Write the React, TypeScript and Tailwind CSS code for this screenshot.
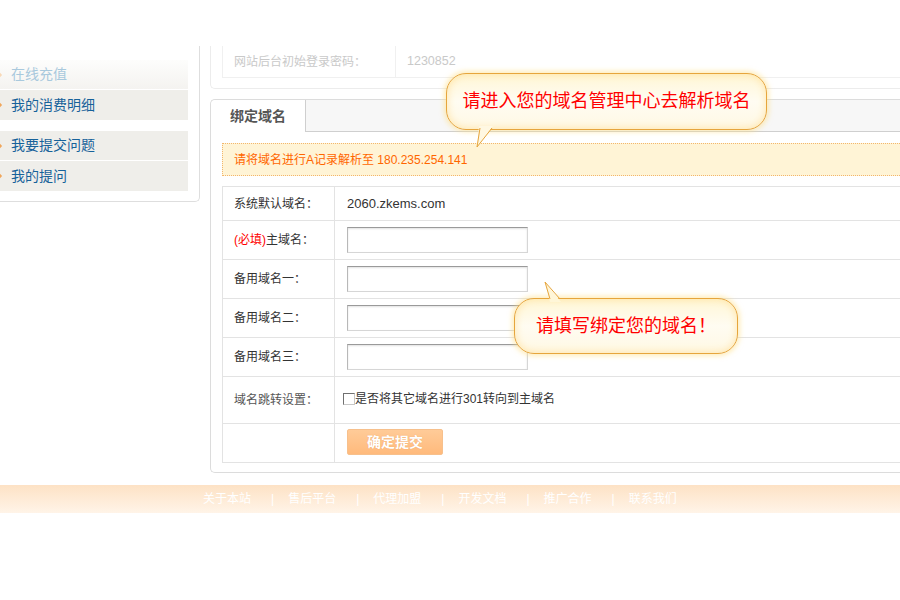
import React from 'react';

const font = "font-['Liberation_Sans','Noto_Sans_CJK_SC',sans-serif]";

const Chevron: React.FC<{ faded?: boolean }> = ({ faded }) => (
  <svg width="8" height="10" viewBox="0 0 8 10" className="-ml-[4px] mr-[7px] shrink-0">
    <path d="M1 1 L5 5 L1 9" fill="none" stroke={faded ? '#f8d9b8' : '#f0a65c'} strokeWidth="1.6" />
  </svg>
);

const SideItem: React.FC<{ label: string; faded?: boolean; sep?: boolean }> = ({ label, faded, sep }) => (
  <div
    className={`flex items-center h-[30px] text-[14px] ${sep ? 'border-b border-white' : ''} ${
      faded ? 'bg-gradient-to-b from-[#fdfdfc] to-[#f4f3f0] text-[#a9c9dd]' : 'bg-[#efeeea] text-[#17629a]'
    }`}
  >
    <Chevron faded={faded} />
    <span>{label}</span>
  </div>
);

const Row: React.FC<{ label: React.ReactNode; h: string; last?: boolean; children?: React.ReactNode }> = ({
  label,
  h,
  last,
  children,
}) => (
  <div className={`flex ${h} ${last ? '' : 'border-b border-[#e3e3e3]'}`}>
    <div className="w-[112px] shrink-0 border-r border-[#e3e3e3] flex items-center pl-[11px] text-[12px] text-[#333]">
      {label}
    </div>
    <div className="flex-1 flex items-center pl-[12px]">{children}</div>
  </div>
);

const Input: React.FC = () => (
  <div className="w-[181px] h-[26px] bg-white border border-[#d6d6d6] border-t-[#9a9a9a] border-l-[#b8b8b8] shadow-[inset_0_1px_2px_rgba(0,0,0,0.12)]" />
);

const Bubble: React.FC<{ className: string; text: string }> = ({ className, text }) => (
  <div
    className={`absolute flex items-center justify-center rounded-[20px] border border-[#e6a53c] bg-gradient-to-b from-[#fff6d6] via-[#fffcf2] to-[#fff8e4] shadow-[0_0_5px_2px_rgba(255,222,130,0.55),inset_0_0_8px_rgba(255,214,120,0.6)] text-[18px] text-[#ff0000] ${className}`}
  >
    {text}
  </div>
);

const footerLinks = ['关于本站', '售后平台', '代理加盟', '开发文档', '推广合作', '联系我们'];

export default function App() {
  return (
    <div className={`relative w-[900px] h-[600px] overflow-hidden bg-white ${font}`}>
      <div className="flex items-start pt-[46px]">
        {/* sidebar */}
        <div className="w-[200px] shrink-0 border-r border-b border-[#dedede] rounded-br-[5px] pt-[14px] pb-[10px] pr-[11px]">
          <SideItem label="在线充值" faded sep />
          <SideItem label="我的消费明细" />
          <div className="h-[11px]" />
          <SideItem label="我要提交问题" sep />
          <SideItem label="我的提问" />
        </div>

        {/* main */}
        <div className="ml-[10px] flex-1 flex flex-col">
          <div className="border-l border-b border-[#ececec] rounded-bl-[5px] pl-[11px] pb-[10px]">
            <div className="flex h-[32px] border-l border-b border-[#f0f0f0] text-[12px] text-[#c9c9c9]">
              <div className="w-[173px] border-r border-[#f0f0f0] flex items-center pl-[11px]">网站后台初始登录密码：</div>
              <div className="flex items-center pl-[11px] text-[12.5px]">1230852</div>
            </div>
          </div>

          <div className="mt-[10px] border-l border-t border-b border-[#dcdcdc] rounded-tl-[5px] rounded-bl-[5px] pb-[9px]">
            <div className="flex h-[32px]">
              <div className="w-[95px] bg-white border-r border-[#cfcfcf] rounded-tl-[5px] flex items-center justify-center text-[14px] font-bold text-[#555]">
                绑定域名
              </div>
              <div className="flex-1 bg-[#f7f7f7] border-b border-[#cfcfcf]" />
            </div>
            <div className="px-[11px] pr-0">
              <div className="mt-[11px] h-[33px] bg-[#fff4d6] border border-r-0 border-dotted border-[#f3b66c] flex items-center pl-[11px] text-[12px] text-[#ff6600]">
                请将域名进行A记录解析至 180.235.254.141
              </div>
              <div className="mt-[10px] border-l border-t border-b border-[#e3e3e3]">
                <Row label="系统默认域名：" h="h-[34px]">
                  <span className="text-[13px] text-[#333]">2060.zkems.com</span>
                </Row>
                <Row
                  label={
                    <span>
                      <span className="text-[#ff0000]">(必填)</span>主域名：
                    </span>
                  }
                  h="h-[39px]"
                >
                  <Input />
                </Row>
                <Row label="备用域名一：" h="h-[39px]">
                  <Input />
                </Row>
                <Row label="备用域名二：" h="h-[39px]">
                  <Input />
                </Row>
                <Row label="备用域名三：" h="h-[39px]">
                  <Input />
                </Row>
                <Row label={<span className="text-[#555]">域名跳转设置：</span>} h="h-[47px]">
                  <div className="flex items-center -ml-[4px] -mt-[2px] text-[12px] text-[#333]">
                    <span className="w-[12px] h-[12px] bg-white border border-[#c8c8c8] border-t-[#707070] border-l-[#707070]" />
                    <span>是否将其它域名进行301转向到主域名</span>
                  </div>
                </Row>
                <Row label="" h="h-[38px]" last>
                  <div className="w-[96px] h-[26px] -mt-[2px] rounded-[2px] border border-[#f7c08c] bg-gradient-to-b from-[#ffcb98] to-[#ffba7c] flex items-center justify-center text-[14px] font-bold text-white [text-shadow:0_0_1px_rgba(200,110,40,0.4)]">
                    确定提交
                  </div>
                </Row>
              </div>
            </div>
          </div>
        </div>
      </div>

      {/* footer */}
      <div className="mt-[12px] h-[28px] bg-gradient-to-b from-[#fde2c5] to-[#fff4e8] flex items-center pl-[203px] text-[12px] text-white">
        {footerLinks.map((l, i) => (
          <React.Fragment key={l}>
            <span className="mr-[20px]">{l}</span>
            {i < footerLinks.length - 1 && <span className="mr-[14px]">|</span>}
          </React.Fragment>
        ))}
      </div>

      {/* tooltip bubbles */}
      <Bubble className="left-[446px] top-[73px] w-[321px] h-[57px]" text="请进入您的域名管理中心去解析域名" />
      <svg className="absolute left-[474px] top-[126px]" width="22" height="23" viewBox="0 0 22 23">
        <polygon points="5,0 3,21 19,0" fill="#fff8e2" />
        <polyline points="6,2 3,21 18,2" fill="none" stroke="#e6a53c" strokeWidth="1" />
      </svg>

      <Bubble className="left-[514px] top-[298px] w-[224px] h-[56px]" text="请填写绑定您的域名！" />
      <svg className="absolute left-[540px] top-[279px]" width="24" height="23" viewBox="0 0 24 23">
        <polygon points="5,3 10,23 21,23" fill="#fff6d8" />
        <polyline points="10,20 5,3 20,20" fill="none" stroke="#e6a53c" strokeWidth="1" />
      </svg>
    </div>
  );
}
